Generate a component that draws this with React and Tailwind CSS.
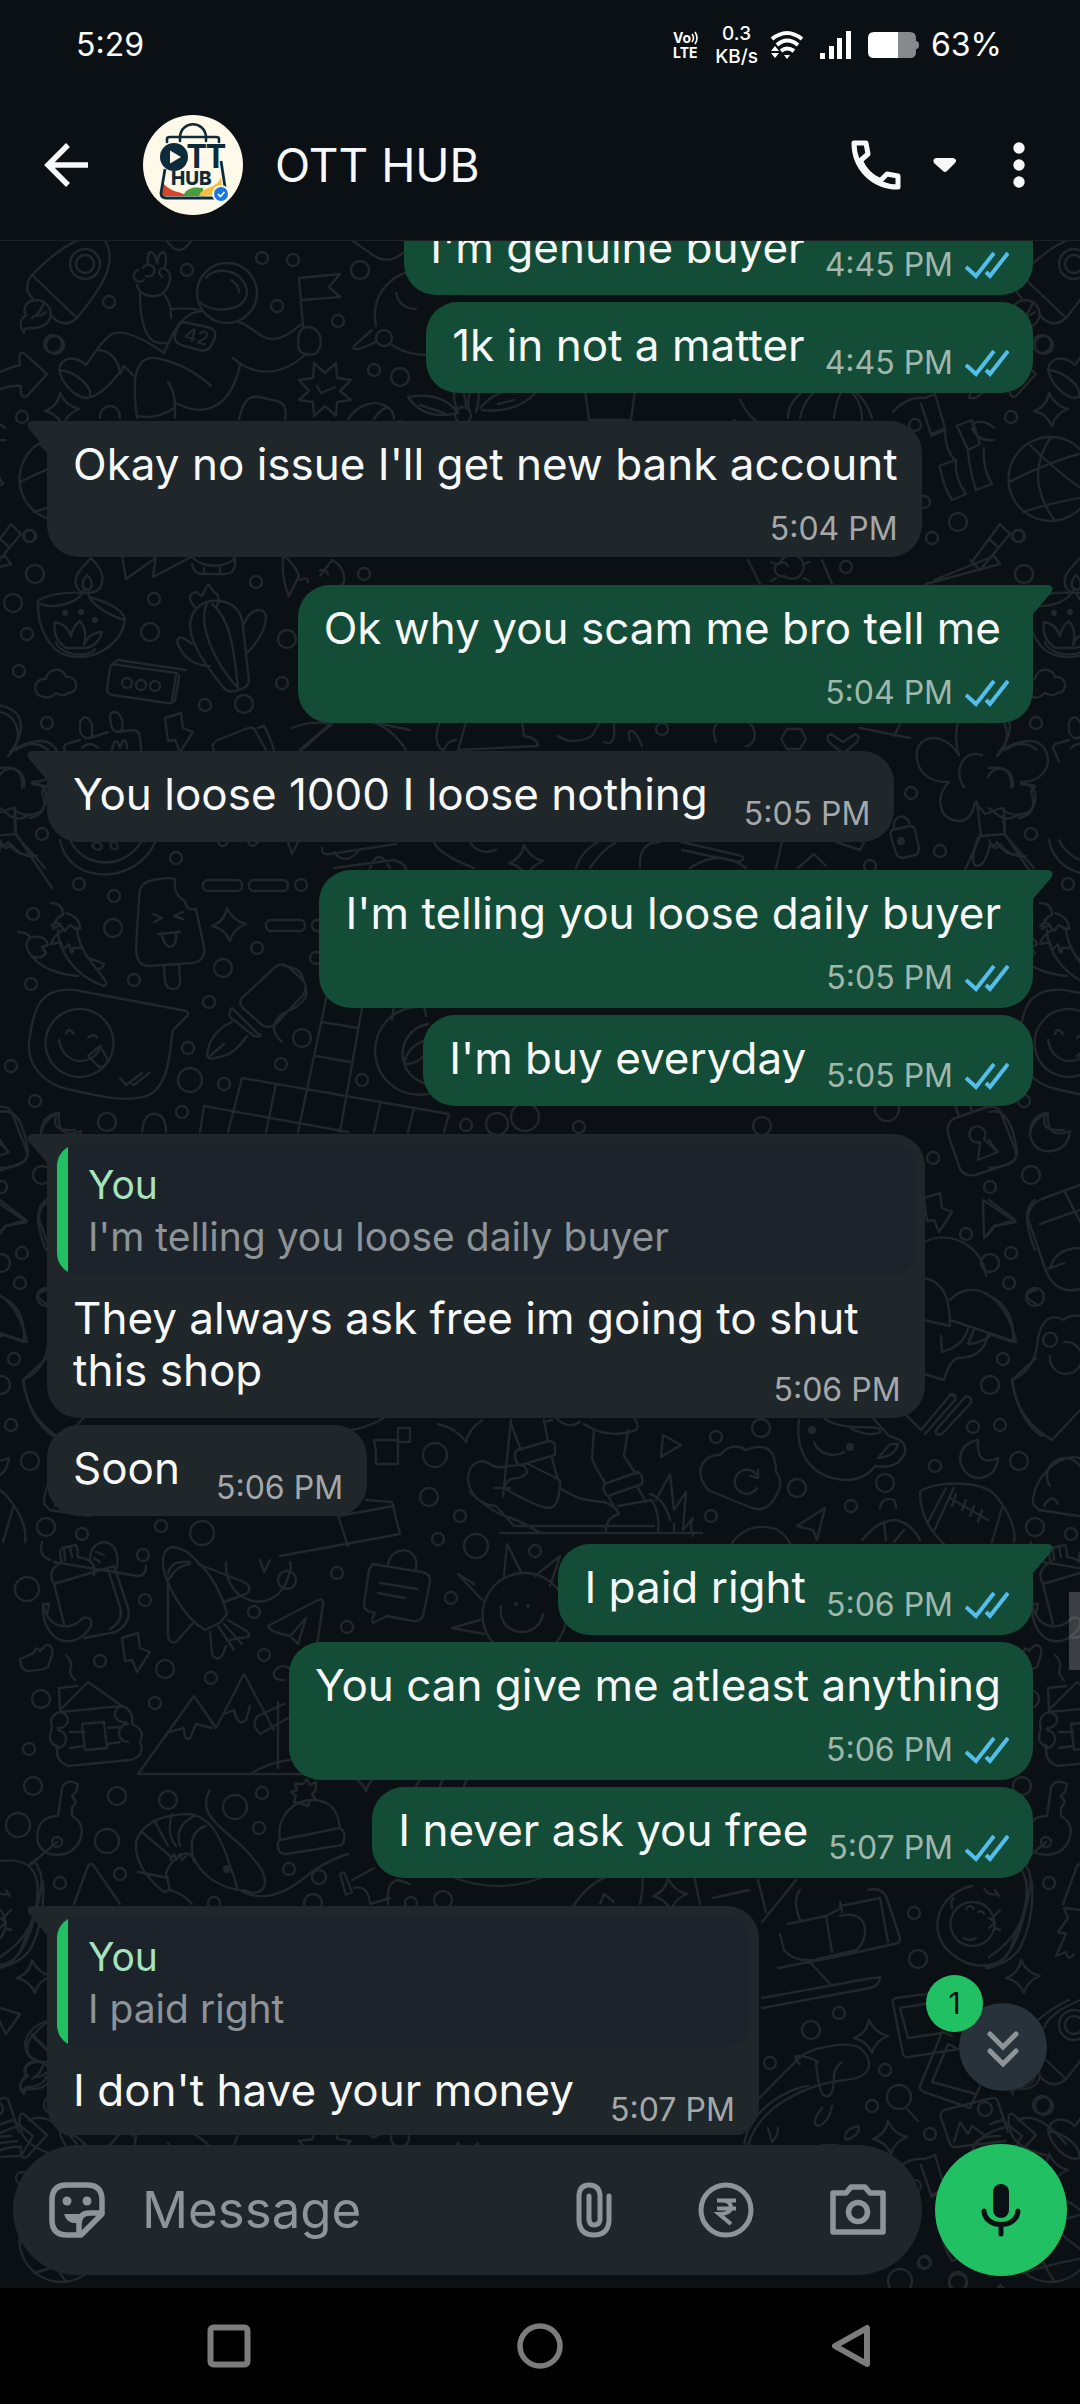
import { useState } from 'react'

const messages = [
  { id: 1, mine: true, text: "I'm genuine buyer", time: '4:45 PM' },
  { id: 2, mine: true, text: '1k in not a matter', time: '4:45 PM' },
  { id: 3, first: true, text: "Okay no issue I'll get new bank account", time: '5:04 PM', layout: 'below' },
  { id: 4, first: true, mine: true, text: 'Ok why you scam me bro tell me', time: '5:04 PM', layout: 'below' },
  { id: 5, first: true, text: 'You loose 1000 I loose nothing', time: '5:05 PM' },
  { id: 6, first: true, mine: true, text: "I'm telling you loose daily buyer", time: '5:05 PM', layout: 'below' },
  { id: 7, mine: true, text: "I'm buy everyday", time: '5:05 PM' },
  { id: 8, first: true, quote: "I'm telling you loose daily buyer", text: 'They always ask free im going to shut this shop', time: '5:06 PM', layout: 'corner' },
  { id: 9, text: 'Soon', time: '5:06 PM' },
  { id: 10, first: true, mine: true, text: 'I paid right', time: '5:06 PM' },
  { id: 11, mine: true, text: 'You can give me atleast anything', time: '5:06 PM', layout: 'below' },
  { id: 12, mine: true, text: 'I never ask you free', time: '5:07 PM' },
  { id: 13, first: true, quote: 'I paid right', text: "I don't have your money", time: '5:07 PM' },
]

// x, y, r
const dots = [
  [109,302,6],[53,344,9],[187,270,6],[262,258,6],[293,260,6],[277,306,6],[360,270,9],[338,321,6],[374,370,6],[400,377,9],[22,417,6],
  [35,574,9],[13,603,9],[154,599,6],[256,582,6],[27,634,6],[150,632,9],[19,671,6],[29,536,6],[282,683,6],[205,705,6],[244,704,9],[47,723,6],[287,639,9],[364,574,6],[42,834,6],[176,858,6],
  [662,729,6],[911,793,6],[940,851,6],[870,866,6],[846,567,6],[915,425,6],[1044,345,9],[924,502,6],[958,522,9],[932,538,6],[1019,536,6],[400,427,6],
  [79,884,6],[114,896,6],[33,914,6],[113,928,9],[301,885,6],[257,948,6],[223,968,9],[316,958,6],[134,980,6],[31,984,6],[209,1002,6],[302,1038,9],[188,1048,6],[281,1064,6],[190,1080,12],[224,1084,6],[11,1066,6],[35,1101,6],[107,1122,9],[182,1112,6],[362,1080,6],[466,1125,6],[497,1124,11],[525,1117,14],[42,1175,9],[22,1253,6],[20,1283,6],[14,1359,6],[11,1425,6],[30,1461,9],
  [579,1127,6],[762,1126,9],[887,1109,12],[933,1158,6],[990,1187,6],[966,1234,6],[990,1263,9],[1035,1297,9],[990,1385,9],[761,1428,9],[716,1437,6],[973,1427,6],[935,1466,6],[797,1488,9],[885,1483,9],[851,1506,6],[711,1516,6],
  [435,1455,12],[429,1497,9],[460,1516,6],[438,1539,6],[476,1546,12],[535,1551,6],[451,1598,6],[347,1627,6],
  [82,1534,6],[46,1527,9],[161,1526,6],[202,1533,12],[143,1555,6],[27,1589,12],[145,1600,6],[287,1580,9],[337,1573,6],[254,1612,6],[264,1655,6],[165,1669,9],[100,1661,6],[211,1678,6],[41,1699,9],[155,1703,6],[29,1749,6],[33,1786,9],[117,1796,9],[168,1800,9],[235,1807,12],[262,1793,6],[259,1828,6],[289,1869,6],[18,1825,12],[107,1841,12],[60,1883,6],[120,1874,6],[319,1877,7],[214,1903,6],[313,1903,9],[411,1903,6],[443,1900,9],
  [914,1913,6],[918,1959,9],[811,2030,9],[839,2013,6],[770,2063,6],[885,2070,6],[899,2097,12],[872,2106,6],[930,2134,6],[925,2262,6],[900,2281,12],[958,2281,9],
]

const sparkles = [[62,410],[229,925],[34,1977],[871,2037],[890,2138],[365,1775],[670,1895],[526,862]]
const bolts = [[178,730],[135,1650],[937,1210]]

// one tile of the chat wallpaper
const doodles = [
  // rocket
  'M32 275C46 261 60 248 80 239M104 239C120 262 100 290 77 318C66 328 56 322 50 314M32 275C22 288 30 296 34 300M32 275L77 318',
  'M36 300c-10 1-14 8-10 15c-8 6-6 12-2 18c0-6 4-5 12-5c14-2 18-14 12-22c-3-4-7-6-12-6zM44 302c-3 8-5 12-12 16M46 312c-4 4-8 4-12 4',
  // astronaut
  'M206 278c8-12 38-10 41 14c0 20-36 22-47 10M231 280c5 3 8 8 8 12',
  'M137 285c2 14 30 18 33-6c1-8-6-12-9-10c-4 3-1 6 1 8M148 265c-2-16 6-18 9-2M157 263c2-16 12-14 8 4M138 270a6 6 0 1 0 6 10M143 268a6 6 0 1 1 3 8',
  'M140 294c0 22 4 48 20 49h6M164 294c6 8 7 14 7 24M171 309c10-1 22-1 32 2',
  'M203 311c-20 0-30 20-39 42c-20-14-40-24-52-19c-10 6-18 20-26 31c-16-14-30-2-26 8c4 14 20 28 30 24c10-2 20-12 30-25c-2-14-12-22-22-22M60 370c16 2 32 16 30 26M120 374l4-8l9 9',
  'M183 322l24 5q10 2 8 11l-4 8q-4 6-12 4l-18-5q-8-3-6-10l2-6q2-6 6-7z',
  'M238 322c12 2 22 18 36 17c12-1 20-10 28-15M233 358c20 18 48 20 74-5M303 328q12-4 17 8q3 12-5 18q-12 2-16-4q-3-16 4-22z',
  'M303 326L299 278L340 274L329 287L340 297L302 300',
  'M137 418C132 380 134 356 156 358c20 4 40 14 55 28M168 382c8 12 7 24 7 36M138 416q18 4 36-8M176 403c26 14 54 8 64-38',
  'M167 241c8 12 16 12 24 0M353 241l20 14c10 7 20 6 30-2',
  // arrow
  'M-20 398C-16 378 0 370 20 365c-2-14 2-14 6-10l21 19l-20 22c-6 3-7-4-6-10c-10-1-24 2-34 12z',
  // badge with tick
  'M314 363l11 10l11-10l1 15l14 2l-11 11l11 9l-14 2l-1 14l-11-10l-11 10l-1-14l-14-2l10-9l-10-11l14-2zM317 386l4 7l14-6',
  // ball in saucer
  'M376 326c-6-30 14-54 44-56M372 330l-18 16q-3 5 8 2l14-6M392 345q14 10 36 10M396 293q4 16 20 16',
  'M239 419c4-16 8-24 20-22l18 4c8 2 10 10 8 18M348 419c10-14 28-22 42-10q4 4 4 10M100 418c0-16 20-16 20 0M374 419q6-10 14-12',
  'M408 397q34-6 50 16q-34 8-50-16M458 412q-8-20 0-30q8 12 8 24M470 412q-6-18 8-30q2 18-2 30M480 408q20-24 58-18q-20 24-56 20M420 405l24 8M498 404l16-4',
  // balloon and pots
  'M585 390h50l-4 30h-42zM740 400q10 20 24 26q-26 0-30-6M788 418c0-20 20-34 42-34c22 0 36 14 42 34M800 418q4-20 20-30M844 388q-8 10-10 30M846 388q16 10 16 32',
  // bamboo
  'M893 412q14-16 32-14l10-4l10 34l-14 6l-10-30M931 436l14-6q0 20 10 30l-16 6M940 468q4 20 12 32l14-6q-12-16-10-34M956 426l16-6l8 24l-12 6l-10-22M968 452q2 20 8 38l16-6q-10-16-8-36M972 424q12-6 22 4M972 428q6 14 22 12',
  // globe
  'M61 437a42 42 0 1 0 1 0M40 444q30 30 60 50M20 482q40-20 70-28M62 437q-28 40 4 84M34 512q30-10 68-16',
  'M1000 524l-28 38l8 8l30-36zM990 540l8 7',
  // oil lamp
  'M91 558c8 8 13 16 11 24c-1 8-7 11-15 11c-8 0-13-7-11-15c2-8 10-14 15-20zM87 575c6 6 6 12 2 15c-8 0-8-8-2-15z',
  'M84 591c-4 8-18 16-36 15q-14-3-9-6q18-9 44-7M88 594c2 8 16 20 37 26M38 603c-1 24 12 48 28 52c26 8 56-10 59-36c-4-12-22-18-36-22',
  'M55 622q12 2 16 14q2-10 9-15q8 10 4 24q4-12 18-13q-4 14-16 16h-20q-14-10-11-26zM56 642c4 14 34 16 39 7',
  // book and cup
  'M122 555l4 24l28-20M156 555l-3 22l38-20M192 556c8 14 40 12 43 0v10q-2 8-10 8h-24q-8-2-9-10M204 574v-6M220 574v-6',
  // fox
  'M283 556c8 4 14 14 16 20l-10 20q-8-18-6-40M320 576l12-16q14 8 12 22l-8 10M300 580q8-4 8 2M320 570q8 0 8 4',
  // cactus
  'M190 627c0-20 16-28 30-26c16 2 22 12 23 26l6 54q-1 6-8 8q-12 6-18-2C207 667 192 647 190 627zM207 603c-10 22 8 60 30 84M212 604c20 16 22 50 26 84M196 608c-8-8-8-14 0-16l6 4l6-12l6 8q8 4 2 16M244 624c6-16 20-18 22-8c0 14-10 28-18 36M192 644c-14-12-18-4-12 4c4 10 16 18 30 18',
  // cloud
  'M44 697c-14-2-10-20 2-18c2-12 18-12 20-2c12-2 14 16 2 16c-4 4-8 2-12 0q-6 6-12 4z',
  // box
  'M112 664l64 9q4 1 3 5l-4 22q-2 4-8 3l-54-8q-7-1-6-7l3-20q1-4 8-8l68 10M176 676l-4 24',
  // notepad
  'M80 740l-14 4q-4 4 0 8l4 10M90 738l18-6M118 732l14-2q8 0 8 8l2 20M80 722q6-10 12 2v12q-6 6-12-4zM110 714q8-6 12 6q2 12-4 12q-8 0-8-18M82 748q8-8 16 0M112 750l2-8q4-2 6 6l3-8q4 0 4 8',
  'M214 750q-4-6 4-10l30-12q6-2 8 4l10 18M258 728l6-2q4 6 10 24M292 728q20-8 38-4l-30 26M332 724q-24 20-30 26M372 722q20 6 34 28M372 722l38 8',
  'M440 722c-6 14-4 26 4 28q4-10 12-10M466 722l-8 28l80-4q0-8-14-10l-2-14M600 722l-8 14q-20 10-34 0M604 742q12 6 10-18',
  // left tree
  'M0 712c20 4 24 30 8 44M16 750q18-12 32 0M0 768q24-4 22 20M32 784l14 2l-4 6q8 22-12 26M0 808l10 8q10 6 20-2M14 816l2 18l36 54M0 840q4 10 8 2q10 16 24 12',
  // fruit slice
  'M60 840c8 46 78 46 96 0M70 840c14 30 56 30 72 0M92 846q4-8 10 0q-2 8-10 0M110 844q6-6 8 4q-6 4-8-4M218 842q4 8 10 0M248 842q4 8 10 0M288 842l4 12l6-12M322 848q0 8 8 6l66-10M334 852q10 14 24 0M334 868l60-8q14 4 12 12l-36 6M370 868q8-22 20 0M434 842q4 12 40 26M470 842q8 14 26 8',
  // tree on the mountain
  'M959 755c-16-26-46-20-42 4c2 16 16 24 32 23c-14 14-10 34 4 38c12 4 20-4 22-18l10 12l16-6c10 10 30 10 34-6c2-12-4-18-14-20c20 0 30-14 26-28c-6-18-26-16-48-2c12-14 16-34 2-42c-12-8-34-6-42 9c-4 12-4 24 0 36zM982 755c-18-6-30 16-18 32M988 777c6-14 28-10 25 10',
  'M977 802l4 34l24-2l-1-26M981 834l-16 36M1004 834l30 34M978 838q-10 28 0 28q8-2 12-22q6 8 10 0q10 14 26 12',
  // small padlock
  'M892 830l18-4q4 0 5 4l4 18q0 6-4 7l-12 3q-5 0-7-5l-5-16q-1-5 1-7zM894 828c-2-14 14-16 16-2',
  'M787 729h14l5 10l-6 10h-13l-6-10zM829 742q-4-6 2-8l12 8l12-8q6 2 2 8l-12 10h-4zM716 742c-8-20 8-26 20-22c24-2 22 26 10 26M630 740q-4-12 4-8q6 8 8 14',
  'M780 564a12 12 0 1 1 4 12a7 7 0 1 1 4-10M776 564l-5-2M776 578l-5 3M804 564l5-2M804 578l5 3M748 560l12 24M822 560l10 24M902 720l-8 16M860 728l50 10M926 584l74-20l-6-8l-60 24M970 560l10 10',
  'M576 868q6-18 22-26M590 868q10-16 26-26M640 868q-2-26 20-26M682 842l60 14q4 4-4 6l-56-12M690 868q30-20 56 0M776 868l6-26M836 842l24 8l4-8M798 868l16-14l12 12',
  // ice lolly
  'M175 879q-4-2-16 0c-16 2-20 6-20 20l-3 48q0 20 14 19l42-3q14-2 12-16l-8-38q-10 2-11-8q-12-6-10-22zM164 966l1 16q2 8 10 7q6-2 5-10l-1-14M153 914l9 4l-8 4M183 912l-9 4l9 3M158 934l22-2M162 934c2 18 16 16 14 0',
  // chillies
  'M51 926q8-8 12 4q-10 6-12 14l10-2l2 8l6-6l2 8q2 2 2-4l8 0M51 903q12 0 12 12q-8 2-10 14l7-4l5 6l5-6l6 4l4 0q0-12-14-16M58 930c0 20 16 46 46 56q4-2 1-6l-14-18c-8-10-14-24-14-34M30 954c10 14 26 20 48 22M18 932q8 0 12 5M30 954q-8-12 2-17q14-2 16 8l-6 2l4 6q-4 6-12 4M88 958q8 2 16 6q-2 6-8 5',
  // smiling bubble
  'M75 990l106 20q10 1 6 6l-14 14c-4 20-2 50-22 64c-22 12-68-2-84-5c-18-4-40-20-38-46c4-34 10-56 46-53zM80 1009a34 34 0 1 1-1 0M66 1034q2-8 8 0M88 1038q6-6 9 0M59 1040c4 26 34 28 42 6M88 1056l12-10l8 14q-6 12-12 4zM120 1078l6 7l16-12M130 1083l4 2l15-12',
  // fountain pen
  'M242 998l30-28q7-8 15-4l16 14q6 8-1 16l-24 26q-8 8-16 3l-18-16q-6-6-2-11zM232 1008l28 28M232 1008q-6 8 2 12l20 16q8 2 6-2M232 1022c-18 8-24 22-25 34q2 4 8 2c14-2 22-8 32-22M210 1056l14-12M284 966q18 2 19 14M306 990q4 12-24 24q-16 14 0 28',
  // crossword
  'M242 1078l207 36l-5 18M242 1078l-14 54M204 1106l144 26M204 1106l-4 26M276 1084l-10 48M328 990l-30 142M362 1008l-22 124M322 1022l36 6M316 1056l34 6M380 1104l-6 28M414 1108l-6 24',
  // stopwatch
  'M424 1007a44 44 0 1 0 20 80M428 1024a30 30 0 1 0 10 60M392 1020l2-14h30l2 10M404 1064q4-20 24-24M404 1064q20 0 24-18',
  // under the left bubbles
  'M0 1112q22-6 28 40q0 14-28 16M0 1140l8 12M0 1200l26 20l-20 6l-8 10M41 1132q4-14 16-18q-8 18 18 16M142 1132q2-20 14-18q10 2 10 18M0 1296q26 10 24 46l-24-8M46 1200q-16 10 0 50M47 1290q-18 4 0 14M47 1358l-24 22q6 40 30 56',
  // open padlock
  'M953 1119l34-12q10-2 14 6l14 36q4 10-6 15l-34 11q-10 2-15-6l-11-32q-4-12 4-18zM959 1116l-8-22M972 1111l-8-22M984 1107l-6-18M980 1142l-2 18l20-8l-14-13a8 8 0 1 0-4 3',
  'M1048 1113q-18 2-18 22q4 18 22 16q16-2 18-20q-24 10-22-18zM983 1200l33 22l-22 4l-10 12zM978 1440q-18 4-18 20q4 18 20 18q16-2 18-20q-22 10-20-18z',
  'M1080 1185l-38 14q-14 6-14 20l18 52q10 24 34 18M1040 1224l40-14M1064 1190l16 32M1050 1268q6-20 30-20M1048 1269l16-6',
  // umbrella
  'M924 1242c30-14 60 8 62 34M924 1278c20 4 26 20 26 48l-26-6M950 1300c20-22 56-8 66 42l-66-22M968 1328q-4 18-26 24l-1-16M974 1330l-6 14q10 0 22-8M924 1374l20 6q6-20 14-22q26 0 30-24',
  'M905 1414l16 16l30-36q6 0 4 6l-30 34M950 1394l3 2M936 1430l30-34q8 2 4 8l-28 30q-8 2-6-4',
  // heart paw
  'M1012 1380c4 28 16 46 40 60l28-30M1012 1380q24-10 26-42q6-28 26-18q6-6 16-4M1046 1334a7 7 0 1 0 2-1M1050 1356a16 16 0 1 0 14-14',
  'M376 1452l-2-12l24 0v24l-22 0v-10M398 1440v-12h12v14h-12M438 1424q18 4 28 18q2-12 16-22M340 1430q20 2 44-12',
  // boots
  'M511 1420l-8 76M511 1424l10 26M544 1420l4 22M552 1420l-8 2M556 1418q12 12 24 4M584 1424q24 16 52 6q4-4-2-12',
  'M594 1430l-2 28q2 8 14 26M628 1430l-4 26l12 18M515 1454q0-4 6-5l28-8q6 0 6 6v8l-34 10q-6 0-6-11M604 1484l34-12q6 4 4 12l-34 12q-6-4-4-12M608 1496l8 14M638 1488l8 14',
  'M468 1480c0-18 14-22 22-16c10 8 24-2 34 2q8 8-6 12q-12 0-14 10q34 20 46 20q10-2 10-28l-32-16M468 1480q4 24 28 26l18 20h140M470 1492q16 16 34 24q16 4 36 17M552 1458l6 22M560 1488c16 10 20 12 44 14q12 4 15 12q-14 4-13 18M618 1506l34-6q8 14 6 32M650 1494q14 4 20 26M656 1500l14-26l4 36l12-18l-3 38l10-12q-4 8 0 18M674 1532v-8M500 1533h202M494 1488h16',
  // nav triangle, cloud
  'M663 1435l18 10l-20 12zM708 1490c-16-20-4-36 12-35q12-14 26-5q30-12 30 22q10 12-4 30q-8 10-20 6zM756 1474a12 12 0 1 0 1 14M758 1470v8l-8-2',
  // face with ring
  'M799 1420c-4 30 10 60 50 60q18-2 26-14q24 4 30-14q2-12-16-16l-16-18M814 1442c4 12 20 16 30 10M824 1418c20 16 60 4 56 14q-10 6-30-4M878 1458l12-14h8q-2 10-14 13z',
  // football
  'M920 1492c10-10 60-14 76 4c16 20 20 34 18 46M920 1492q0 30 24 52M946 1488l-18 34M954 1487l-20 44M1002 1508l-10 34M950 1498l38 22M956 1494l-4 12M966 1500l-4 10M974 1506l-4 10M982 1510l-4 12',
  'M825 1508l-28 18l16 4l4 10zM732 1543q16-22 44-14q8 4 14 14M880 1508q2-12 14-8q2 4 2 8M862 1540q16-20 34-20q16 4 24 20M884 1522l2 18M904 1530l-10 12',
  'M1080 1458c-20-6-48 20-47 46l6 6l40 6M1050 1486a14 14 0 0 1 30-20M1044 1506q8-14 14-2',
  // ruler and shield
  'M226 1562c-2 44 50 54 62 16q4-12 2-16M260 1560l4 12l6-12M280 1556l120-22l-8-32l-26-2M338 1516l56-10M338 1516l10 30M50 1560q-12-4-8-18M54 1562l84 14q8 0 8-10',
  // groceries
  'M54 1584q-8-14 8-22q-4-10 0-14l14-3q2 4 2 12q14 2 16 10q2 4 0 8M54 1584l60-18l14 42q4 14-12 24l-32 6M54 1584l10 40M90 1560q0-16 14-18q16 2 13 26M64 1548l1 12M70 1547l2 10M96 1552l8 3M94 1558l6 4M108 1569l12 38q4 14-10 22M43 1604c6 28 30 26 40 14q10-2 8 8c-14 24-44 20-48-14zM43 1604l6 0l-2 10',
  'M20 1659l14-6q2-8 6-2l6-6q8 0 6 10l-4 12q-8 4-22 4q-6-4-6-12zM66 1655q8 8 4 16q0 4 5 9',
  // shuttle
  'M163 1558q4-18 24-6c20 16 34 38 40 62l-6 8l-16 8c-18-10-44-48-42-72zM168 1574q2-14 22-12M170 1578q6-12 20-14M198 1564l46 18q10 6 2 12l-22 8M168 1578v56q0 10 8 8l18-20M210 1632l2 22q4 8 10 2l4-10M228 1620l20 12q4 6-8 6l-10 2M218 1626l16 24M224 1624l18 20',
  'M268 1626l50-26q6-2 5 4l-6 42M268 1626q2 6 22 10l16-18l-8 26M298 1644l-6-6',
  // chat bag
  'M372 1564l50 8q9 2 8 10l-7 34q-3 6-10 5l-26-5l-14 7q-2-4 2-10q-12-2-11-9l5-34q2-6 8-6zM388 1564c4-20 32-18 28 5M380 1583l37 6M378 1593l27 5',
  // sun
  'M504 1576l3-32l14 28M535 1576l25-20l-10 30M474 1584l-16-10l24 26M480 1620l-28 8l32 6M501 1606c-4 32 38 34 42 8M524 1573a42 42 0 1 0 1 0',
  // cabin
  'M60 1710l28-28l34 24l-62 6M60 1710l-1-22l18-2M60 1712q-12 4-8 16q-6 16 6 18q-4 14 10 20l62-6q16-4 10-18q6-12-8-18q2-14-10-18M82 1724l22-2l3 26l-22 2zM60 1712a9 8 0 1 1-2 16M58 1730a9 9 0 1 1-2 18M122 1706a9 8 0 1 0 4 16M128 1724a9 9 0 1 0 0 18M70 1732h14M70 1748l14-2M108 1728l12-1M108 1744l12-2',
  // mountains
  'M138 1774l56-78l22 32l28-54l30 56M138 1774h170M170 1732l14-4q0 14 6 10l6-14l16 4M224 1714l10-4q4 18 12 10l4-14M278 1768q0-44 0-66M284 1680q-12 0-10-8q8-12 20 0M250 1774q20-12 40-14M284 1704l-26 12q-8 8 2 18l28-16',
  // key
  'M58 1816l4-28q4-10 16-4l-2 8l-4 4l4 6l-4 6l0 8q14 8 8 24q-8 18-30 14q-16-6-12-24q4-14 20-14zM57 1842l-28 24M38 1858l-8 6M34 1862l4 4',
  // prawn
  'M164 1892q-30-24-28-50q8-26 50-28c28 0 38 30 52 76q-30-6-42-28c-8-20-28 0-30 12l4 16zM142 1832l28 24M154 1820l14 26M172 1814q-6 20 4 32M194 1816q-20 10-14 30M206 1826q-20 6-12 36M138 1872l30 6M170 1860l4-6l2 6l4-6l2 6l4-4M170 1890q14 4 22 14M210 1790c-18 30 30 46 44 70c20 20 10 40-10 30M240 1890c30 18 60-8 74-20M314 1870q20-12 34-16',
  // peanut
  'M0 1861c30-4 40 10 38 40q-6 36-38 56M38 1868q8 10-2 42c-6 32-20 54-36 58M6 1890l4 6M0 1918l6 4l-6 6',
  // beanie
  'M280 1840c-4-24 14-40 32-40c20 0 26 12 28 28M280 1840l60-12q6 4 4 12q0 6-8 6l-50 8q-8 0-8-8q-1-4 2-6M302 1804l-8-2l2-6l-5-4l6-2l-2-6l8 0l4-5l3 6l6-3l0 8l-4 4l4 6l-6 0l-2 6z',
  'M74 1904l14-38q3-4 6 0l26 38M340 1874l4-2l8 20l-6 3zM352 1880q12-6 22-12M354 1888q14-4 16 16M388 1904q-2-22 10-24l12 4M370 1904l20-6M450 1876q48 20 96 0M416 1786l6-10M440 1786l4-10M464 1786l4-10',
  // paper plane and flame
  'M0 2008l20 6l-14 20l-8-16M46 2021c-20 8-26 24-16 36l16 8M32 2034l14 14M46 2062c-20-2-24 8-18 14q-12 8-6 16q2-6 10-5q12-2 14-10',
  // satellite dish
  'M574 1905q20-30 46-30M600 1904l4-10l10 8M640 1904q4-20 2-28M700 1904l-6-28M713 1898l36-8M758 1880l8 32M762 1922l34-42M788 1924l38-8l6 36M800 1920q-8-20 0-30M826 1916q20-10 14-10l40-8l8 44M840 1916c30-8 30 24 16 34l-42 10q-20 2-30-10l-4-16M842 1912l-2-10M868 1890q16-4 20 12l12 36q0 6-6 6l-54 12l-62 12M810 1962l22 24M762 1998l110-20q8 0 8-2q0 10-10 12l-108 20',
  // baby
  'M1026 1880c4 30-10 50-16 70c-10 20-40 20-58 4c-26-20-16-60 20-68M1032 1882c2 30-4 50-12 66q-10 16-34 20M972 1902a22 22 0 1 0 1 0M966 1909q4-6 8 0M978 1912q4-2 6 2M964 1938q6 4 12 0M952 1908q-2-8 2-10M992 1918l8-8M994 1928l6 2M984 1888q4 8 12 6',
  'M1080 1910l-16-2l4 10l-10 14l8 2l-10 22l10-4q2 10 8 2',
  // photos
  'M895 1998l48-6M895 1998q-3 2-2 6l10 50q1 4 6 3l50-8M900 2008l36-6M900 2008l8 30l34-5M952 2036l-10-4l-22 54q-1 4 4 6l46 16l12-26M956 2048l-8-4l-16 38l44 12',
  'M944 2110l48-12q5-1 6 4l10 30M944 2110q-4 2-3 8l9 26q2 4 6 3l50-6M954 2142l6-20l8 12l4-8l14 10',
  'M907 2109l11 12M1080 2000l-20 10q-14 10-16 18',
  // whale
  'M748 2146c10-40 60-62 96-66c30-2 30-20 16-32c-12-8-44 0-56 6q-16 14-60 60M800 2064q-6-4-4-8q14 0 22 6M816 2062c2 20 4 34 10 34q8 2 8-22q2-8 8-12M808 2086c-20 2-60 24-64 60M822 2108q-12 16-4 18q10-2 14-20M768 2128l4 14q6-6 6-14M846 2140q-4-10 12-14q4 8-12 14',
  'M1000 2136q-30 0-26 16M990 2124l12-4l20 16l-12 20q-50 0-50 20',
  'M1018 2120q20-10 48 24M1010 2128q2 20 40 28',
]

function Tile() {
  return (
    <g>
      {doodles.map((d, i) => <path key={i} d={d} />)}
      {dots.map(([x, y, r]) => <circle key={x + '-' + y} cx={x} cy={y} r={r} />)}
      {sparkles.map(([x, y]) => (
        <path key={x} transform={`translate(${x} ${y})`} d="M-2 -17Q4 -4 17 -1Q4 4 1 16Q-4 4 -17 1Q-4 -4 -2 -17z" />
      ))}
      {bolts.map(([x, y]) => (
        <path key={x} transform={`translate(${x} ${y})`} d="M-13 -12L3 -17L5 -2L15 2L2 22L-3 10L-10 11z" />
      ))}
      <circle cx="85" cy="264" r="15" />
      <circle cx="85" cy="264" r="9" />
      <circle cx="227" cy="293" r="30" />
      <circle cx="384" cy="338" r="8" />
      <circle cx="463" cy="415" r="8" />
      <circle cx="57" cy="1842" r="5" />
      <circle cx="985" cy="2109" r="7" />
      <circle cx="127" cy="683" r="5" />
      <circle cx="141" cy="685" r="5" />
      <circle cx="155" cy="686" r="5" />
      <rect x="203" y="880" width="39" height="11" rx="5" />
      <rect x="249" y="880" width="39" height="11" rx="5" />
      <rect x="266" y="920" width="39" height="11" rx="5" />
      <rect x="312" y="920" width="39" height="11" rx="5" />
      <g fill="#22272b" stroke="none">
        <text x="183" y="340" fontSize="19" fontWeight="600" transform="rotate(14 183 340)">42</text>
        <circle cx="65" cy="613" r="3" />
        <circle cx="81" cy="612" r="3" />
        <circle cx="95" cy="620" r="3" />
        <circle cx="901" cy="841" r="4" />
        <circle cx="227" cy="1869" r="4" />
        <circle cx="812" cy="1430" r="4" />
        <circle cx="850" cy="1447" r="4" />
        <circle cx="516" cy="1604" r="2" />
        <circle cx="528" cy="1606" r="2" />
      </g>
    </g>
  )
}

function Wallpaper() {
  return (
    <svg className="absolute inset-0 h-full w-full" fill="none" stroke="#22272b" strokeWidth="2.4" strokeLinejoin="round" strokeLinecap="round" aria-hidden="true">
      <g transform="translate(0 -241)">
        <Tile />
        <g transform="translate(989 0)"><Tile /></g>
        <g transform="translate(-989 0)"><Tile /></g>
        <g transform="translate(0 1761)"><Tile /></g>
        <g transform="translate(989 1761)"><Tile /></g>
      </g>
    </svg>
  )
}

function Ticks() {
  return (
    <svg className="h-7 w-11" viewBox="0 0 44 28" fill="none" stroke="#53bdeb" strokeWidth="4" aria-label="Read">
      <path d="M1 16L11 25L29 2" />
      <path d="M21 21L25 25L43 2" />
    </svg>
  )
}

function Tail({ mine }) {
  return mine ? (
    <svg className="absolute top-0 left-full h-8 w-5" viewBox="0 0 20 32" fill="#144d37" aria-hidden="true">
      <path d="M-1 0H15Q22 1 18 8L0 29H-1z" />
    </svg>
  ) : (
    <svg className="absolute top-0 right-full h-8 w-5" viewBox="0 0 20 32" fill="#1f272a" aria-hidden="true">
      <path d="M21 0H5Q-2 1 2 8L20 29H21z" />
    </svg>
  )
}

function Meta({ mine, time }) {
  return (
    <div className={mine ? 'flex items-center gap-3 text-[#a0b7ae]' : 'flex items-center text-[#a5a8aa]'}>
      <time className="whitespace-nowrap text-[32px] leading-10">{time}</time>
      {mine && <Ticks />}
    </div>
  )
}

function Bubble({ msg }) {
  const { mine, first, quote, text, time, layout } = msg

  let shape = 'relative flex max-w-[89%] shrink-0 flex-col text-[#f7f8fa] '
  shape += mine ? 'self-end bg-[#144d37] pb-[10px] ' : 'self-start bg-[#1f272a] pb-2 '
  if (!first) shape += 'rounded-[32px] mt-[7px]'
  else if (mine) shape += 'rounded-[32px] rounded-tr-none mt-7'
  else shape += 'rounded-[32px] rounded-tl-none mt-7'

  return (
    <li className={shape}>
      {first && <Tail mine={mine} />}

      {quote && (
        <blockquote className="mx-[10px] mt-[10px] flex overflow-hidden rounded-[22px] bg-[#1d232a] text-[39px] leading-[52px]">
          <div className="w-[11px] shrink-0 bg-[#21c063]" />
          <div className="pt-[15px] pr-6 pb-3 pl-5">
            <p className="text-[#a6e3bf]">You</p>
            <p className="text-[#8d9499]">{quote}</p>
          </div>
        </blockquote>
      )}

      {layout === 'below' && (
        <div className="flex flex-col pt-[17px] pr-6 pl-[26px]">
          <p className={mine ? 'pr-2 text-[44px] leading-[52px]' : 'text-[44px] leading-[52px]'}>{text}</p>
          <div className="mt-[19px] self-end"><Meta mine={mine} time={time} /></div>
        </div>
      )}

      {layout === 'corner' && (
        <div className="flow-root pt-[17px] pr-6 pl-[26px] text-[44px] leading-[52px]">
          <span>{text}</span>
          <div className="float-right mt-[26px]"><Meta mine={mine} time={time} /></div>
        </div>
      )}

      {!layout && (
        <div className={mine ? 'flex items-end justify-between gap-5 pt-[17px] pr-6 pl-[26px]' : 'flex items-end justify-between gap-9 pt-[17px] pr-6 pl-[26px]'}>
          <p className={mine ? 'pb-3 text-[44px] leading-[52px]' : 'pb-[14px] text-[44px] leading-[52px]'}>{text}</p>
          <Meta mine={mine} time={time} />
        </div>
      )}
    </li>
  )
}

function StatusBar() {
  return (
    <div className="flex h-[90px] items-center justify-between pr-[78px] pl-[76px] text-[32px] leading-10 text-white">
      <span>5:29</span>
      <div className="flex items-center">
        <div className="flex flex-col text-[14px] leading-[15px] font-bold">
          <span className="flex items-center">
            Vo
            <svg width="8" height="14" viewBox="0 0 8 14" fill="none" stroke="white" strokeWidth="1.6" aria-hidden="true">
              <path d="M1 3q3 4 0 8M4 1q4 6 0 12" />
            </svg>
          </span>
          <span>LTE</span>
        </div>
        <div className="ml-4 flex flex-col text-center text-[19px] leading-[23px] font-medium">
          <span>0.3</span>
          <span>KB/s</span>
        </div>
        <svg className="ml-3" width="34" height="30" viewBox="0 0 34 30" fill="none" stroke="white" strokeWidth="4" aria-hidden="true">
          <path d="M2 9Q17 -3 32 9M7 15Q17 6 28 15" />
          <path d="M11 21Q17 16 24 21" />
          <path d="M14 25h6l-3 4zM1 21l4-5l4 5zM1 23h8l-4 5z" fill="white" stroke="none" />
        </svg>
        <svg className="ml-4" width="32" height="30" viewBox="0 0 32 30" fill="white" aria-hidden="true">
          <path d="M0 23h5v6h-5zM9 16h5v13h-5zM17 8h5v21h-5zM26 1h5v28h-5z" />
        </svg>
        <svg className="ml-4" width="51" height="26" viewBox="0 0 51 26" aria-hidden="true">
          <path d="M30 0h12q6 0 6 6v3q3 0 3 4t-3 4v3q0 6-6 6h-12z" fill="#868a8d" />
          <path d="M30 0H6Q0 0 0 6v14q0 6 6 6h24z" fill="white" />
        </svg>
        <span className="ml-3">63%</span>
      </div>
    </div>
  )
}

function Avatar() {
  return (
    <svg className="ml-[55px] h-[100px] w-[100px]" viewBox="0 0 100 100" role="img" aria-label="OTT HUB logo">
      <circle cx="50" cy="50" r="50" fill="#fef9e9" />
      <g fill="none" stroke="#0d2c3b" strokeWidth="2.6" strokeLinecap="round">
        <path d="M37 26V22C38 5 62 5 63 22V26" />
        <path d="M24 27V24Q24 22 27 22H73Q76 22 76 24V27" />
      </g>
      <path d="M20 68C28 78 38 76 44 81H20Q17 80 19 74z" fill="#d9452b" />
      <path d="M40 81C44 72 52 72 60 73V81z" fill="#4a9c3c" />
      <path d="M56 81C60 70 72 76 78 62L80 80z" fill="#f6bd3f" />
      <path d="M22 54L18 78Q18 83 23 83H74M78 46L82 72" fill="none" stroke="#0d2c3b" strokeWidth="2.8" />
      <circle cx="31" cy="42" r="14" fill="#0d2c3b" />
      <path d="M27 35.500L38 42L27 48.500z" fill="#fef9e9" />
      <text x="44" y="53" fontSize="32" fontWeight="900" fill="#0d2c3b" fontFamily="Lato, sans-serif">TT</text>
      <text x="28" y="70" fontSize="19" fontWeight="800" fill="#0d2c3b" fontFamily="Inter, sans-serif">HUB</text>
      <circle cx="78" cy="79" r="9" fill="#fef9e9" />
      <circle cx="78" cy="79" r="7" fill="#1877e0" />
      <path d="M75 79l2.500 2.500l4-4.500" fill="none" stroke="white" strokeWidth="1.600" />
    </svg>
  )
}

function Header() {
  return (
    <header className="flex h-[150px] items-center pr-[55px] pl-11">
      <button aria-label="Back" className="shrink-0">
        <svg className="h-11 w-11" viewBox="0 0 44 44" fill="none" stroke="#f7f8fa" strokeWidth="5.500" aria-hidden="true">
          <path d="M24 2L4 22L24 42M4 22H44" />
        </svg>
      </button>
      <Avatar />
      <h1 className="ml-8 flex-1 text-[46px] leading-[56px] text-[#f7f8fa]">OTT HUB</h1>
      <button aria-label="Voice call">
        <svg className="h-[50px] w-[50px]" viewBox="0 0 50 50" fill="none" stroke="#f7f8fa" strokeWidth="5" strokeLinejoin="round" aria-hidden="true">
          <path d="M3 3H15L17 14L9 21C14 31 20 37 29 41L36 34L47 36V47C22 47 3 28 3 3z" />
          <path d="M9 21C13 31 19 37 29 41" strokeWidth="6" />
        </svg>
      </button>
      <button aria-label="Call options" className="ml-8">
        <svg className="h-4 w-6" viewBox="0 0 24 16" fill="#f7f8fa" aria-hidden="true">
          <path d="M3 1H20Q25 2 22 6L14 14Q12 16 10 14L1 6Q-1 2 3 1z" />
        </svg>
      </button>
      <button aria-label="More" className="ml-[56px]">
        <svg className="h-[46px] w-3" viewBox="0 0 12 46" fill="#f7f8fa" aria-hidden="true">
          <circle cx="6" cy="6" r="5.700" />
          <circle cx="6" cy="23" r="5.700" />
          <circle cx="6" cy="40" r="5.700" />
        </svg>
      </button>
    </header>
  )
}

function Composer() {
  const [draft, setDraft] = useState('')

  return (
    <footer className="relative flex items-center gap-[13px] px-[13px] pt-[9px] pb-3">
      <div className="flex h-[130px] min-w-0 flex-1 items-center rounded-full bg-[#1f272a] pr-9 pl-9 text-[#8d9599]">
        <button aria-label="Stickers">
          <svg className="h-14 w-14" viewBox="0 0 56 56" fill="none" stroke="currentColor" strokeWidth="5.500" strokeLinejoin="round" aria-hidden="true">
            <path d="M18 3H38Q53 3 53 18V32L32 53H18Q3 53 3 38V18Q3 3 18 3z" />
            <path d="M30 53V42Q30 31 41 31H53" />
            <path d="M15 32H38Q32 34 31 41Q18 43 15 32z" fill="currentColor" stroke="none" />
            <circle cx="18" cy="19" r="4.500" fill="currentColor" stroke="none" />
            <circle cx="38" cy="19" r="4.500" fill="currentColor" stroke="none" />
          </svg>
        </button>
        <input
          aria-label="Message"
          placeholder="Message"
          value={draft}
          onChange={e => setDraft(e.target.value)}
          className="ml-[37px] min-w-0 flex-1 bg-transparent text-[51px] leading-[64px] text-[#f7f8fa] placeholder-[#8d9599] focus:outline-none"
        />
        <button aria-label="Attach">
          <svg className="h-14 w-9" viewBox="0 0 36 56" fill="none" stroke="currentColor" strokeWidth="5" strokeLinecap="round" aria-hidden="true">
            <path d="M33 14V39Q32 53 18 53Q4 53 3 39V13Q4 3 13 3Q23 3 24 13V38Q23 43 18 43Q14 43 13 38V14" />
          </svg>
        </button>
        <button aria-label="Pay" className="ml-[86px]">
          <svg className="h-14 w-14" viewBox="0 0 56 56" fill="none" stroke="currentColor" strokeWidth="5" aria-hidden="true">
            <circle cx="28" cy="28" r="25" />
            <path d="M19 18.500H38M19 26.500H38M22 18.500Q33 18 33 26Q32 32 21 32L33 42" strokeWidth="4" />
          </svg>
        </button>
        <button aria-label="Camera" className="ml-[76px]">
          <svg className="h-[52px] w-14" viewBox="0 0 56 52" fill="none" stroke="currentColor" strokeWidth="5.500" strokeLinejoin="round" aria-hidden="true">
            <path d="M3 9H16L21 3H35L40 9H53V48H3z" />
            <circle cx="28" cy="28" r="9.500" />
          </svg>
        </button>
      </div>
      <button aria-label="Record voice message" className="flex h-[132px] w-[132px] shrink-0 items-center justify-center rounded-full bg-[#21c063]">
        <svg className="h-[54px] w-10" viewBox="0 0 40 54" fill="none" stroke="#0b1014" strokeWidth="5" strokeLinecap="round" aria-hidden="true">
          <rect x="12" y="1" width="16" height="34" rx="8" fill="#0b1014" stroke="none" />
          <path d="M3 28C4 46 36 46 37 28M20 42V51" />
        </svg>
      </button>
    </footer>
  )
}

function NavBar() {
  return (
    <nav className="flex h-[116px] items-center bg-black px-[73px]">
      <button aria-label="Recent apps" className="flex flex-1 justify-center">
        <svg className="h-11 w-11" viewBox="0 0 44 44" fill="none" stroke="#7c7c7c" strokeWidth="6" aria-hidden="true">
          <rect x="3.500" y="3.500" width="37" height="37" rx="3" />
        </svg>
      </button>
      <button aria-label="Home" className="flex flex-1 justify-center">
        <svg className="h-12 w-12" viewBox="0 0 48 48" fill="none" stroke="#7c7c7c" strokeWidth="5.500" aria-hidden="true">
          <circle cx="24" cy="24" r="20" />
        </svg>
      </button>
      <button aria-label="Back" className="flex flex-1 justify-center">
        <svg className="h-11 w-10" viewBox="0 0 40 44" fill="none" stroke="#7c7c7c" strokeWidth="6" strokeLinejoin="round" aria-hidden="true">
          <path d="M36 4V40L4 22z" />
        </svg>
      </button>
    </nav>
  )
}

export default function App() {
  return (
    <div className="flex h-screen flex-col overflow-hidden bg-[#0b1014] font-['Inter','Liberation_Sans',sans-serif]">
      <StatusBar />
      <Header />
      <main className="relative flex min-h-0 flex-1 flex-col overflow-hidden border-t border-[#1c2125]">
        <Wallpaper />
        <div className="relative flex min-h-0 flex-1 flex-col justify-end overflow-hidden">
          <ul className="-mb-[3px] flex shrink-0 flex-col px-[47px]">
            {messages.map(m => <Bubble key={m.id} msg={m} />)}
          </ul>
        </div>
        <div className="absolute right-0 bottom-[618px] h-[78px] w-[11px] bg-white/20" />
        <button aria-label="Scroll to latest, 1 unread" className="absolute right-[33px] bottom-[197px] flex h-[88px] w-[88px] items-center justify-center rounded-full bg-[#27323a] shadow-md">
          <svg className="mt-1 h-9 w-8" viewBox="0 0 32 36" fill="none" stroke="#8d9599" strokeWidth="5" strokeLinecap="round" aria-hidden="true">
            <path d="M3 3L16 16L29 3M3 20L16 33L29 20" />
          </svg>
          <span className="absolute -top-7 -left-[33px] flex h-[57px] w-[57px] items-center justify-center rounded-full bg-[#21c063] text-[30px] text-[#0b1014]">1</span>
        </button>
        <Composer />
      </main>
      <NavBar />
    </div>
  )
}
